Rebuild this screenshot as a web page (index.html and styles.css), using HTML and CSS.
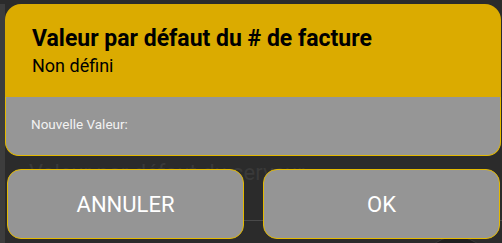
FILE: index.html
```html
<!DOCTYPE html>
<html lang="fr">
<head>
<meta charset="utf-8">
<link rel="stylesheet" href="styles.css">
</head>
<body>
<div class="screen">
  <div class="side-strip"></div>
  <div class="bg-page">
    <div class="bg-label">Valeur par défaut du serveur</div>
    <div class="bg-line"></div>
    <div class="bg-circle"></div>
  </div>
  <div class="overlay">
    <div class="dialog">
      <div class="dialog-head">
        <div class="title">Valeur par défaut du # de facture</div>
        <div class="subtitle">Non défini</div>
      </div>
      <div class="dialog-body">
        <div class="field-label">Nouvelle Valeur:</div>
      </div>
    </div>
    <div class="actions">
      <button class="btn">ANNULER</button>
      <button class="btn">OK</button>
    </div>
  </div>
</div>
</body>
</html>
```

FILE: styles.css
```css
html, body {
  margin: 0;
  padding: 0;
  background: #2b2b2b;
  font-family: Roboto, "Liberation Sans", sans-serif;
}
.screen {
  position: relative;
  width: 502px;
  height: 243px;
  overflow: hidden;
  background: #2b2b2b;
}
.side-strip {
  position: absolute;
  left: 0;
  top: 4px;
  width: 5px;
  height: 239px;
  background: #3d3d3d;
}
.bg-page {
  position: absolute;
  left: 5px;
  top: 0;
  right: 0;
  bottom: 0;
}
.bg-label {
  position: absolute;
  left: 24px;
  top: 160px;
  font-size: 22px;
  color: #393939;
  white-space: nowrap;
}
.bg-line {
  position: absolute;
  left: 10px;
  right: 0;
  top: 220px;
  height: 1px;
  background: #4a4a4a;
}
.bg-circle {
  position: absolute;
  left: 415px;
  top: 236px;
  width: 70px;
  height: 70px;
  border-radius: 50%;
  background: #1f1f1f;
  border: 1px solid #3a3a3a;
}
.overlay {
  position: absolute;
  left: 0;
  top: 0;
  width: 502px;
  display: flex;
  flex-direction: column;
}
.dialog {
  margin: 4px 1px 0 5px;
  display: flex;
  flex-direction: column;
}
.dialog-head {
  background: #dbab00;
  border-radius: 16px 16px 0 0;
  height: 93px;
  box-sizing: border-box;
  padding: 21px 0 0 27px;
}
.title {
  font-size: 23px;
  font-weight: 700;
  color: #000;
  line-height: 27px;
}
.subtitle {
  font-size: 18px;
  color: #000;
  line-height: 22px;
  margin-top: 3px;
}
.dialog-body {
  background: #969696;
  border: 1.5px solid #e3b900;
  border-top: none;
  border-radius: 0 0 14px 14px;
  height: 59px;
  box-sizing: border-box;
  padding: 19px 0 0 25px;
}
.field-label {
  font-size: 13.5px;
  color: #f2f2f2;
  line-height: 16px;
}
.actions {
  display: flex;
  gap: 19px;
  margin: 13px 2px 0 7px;
}
.btn {
  flex: 1;
  height: 70px;
  background: #959595;
  border: 1.5px solid #e3b900;
  border-radius: 14px;
  color: #fff;
  font-family: Roboto, "Liberation Sans", sans-serif;
  font-size: 22px;
  padding: 0;
}
```
